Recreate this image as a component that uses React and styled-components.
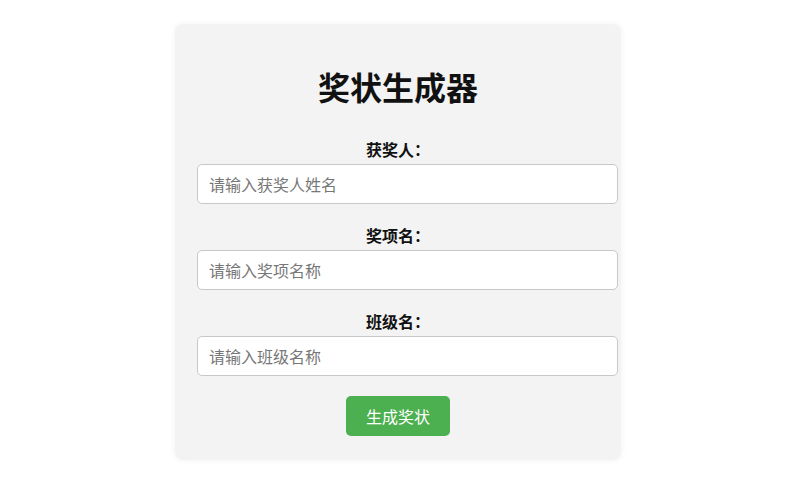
import styled, { createGlobalStyle } from "styled-components";

const Global = createGlobalStyle`
    body {
        margin: 0;
        background: #ffffff;
        font-family: "Noto Sans CJK SC", "Noto Sans", sans-serif;
    }
`

export default function App(){
    const fields = [
        { label: "获奖人：", placeholder: "请输入获奖人姓名" },
        { label: "奖项名：", placeholder: "请输入奖项名称" },
        { label: "班级名：", placeholder: "请输入班级名称" },
    ];

    return(
        <>
            <Global />
            <Page>
                <Card>
                    <Title>奖状生成器</Title>
                    {fields.map(field => (
                        <Field key={field.label}>
                            <Label>{field.label}</Label>
                            <Input placeholder={field.placeholder} />
                        </Field>
                    ))}
                    <Button>生成奖状</Button>
                </Card>
            </Page>
        </>
    )
}

const Page = styled.div`
    padding: 24px 0 34px 175px;
`

const Card = styled.div`
    width: 446px;
    box-sizing: border-box;
    padding: 43px 22px 24px;
    background-color: #f3f3f3;
    border-radius: 8px;
    box-shadow: 0 0 6px rgba(0, 0, 0, 0.06);
    display: flex;
    flex-direction: column;
`

const Title = styled.h1`
    margin: 0 0 32px;
    text-align: center;
    font-size: 32px;
    line-height: 38px;
    font-weight: 700;
    color: #111;
`

const Field = styled.div`
    display: flex;
    flex-direction: column;
    margin-bottom: 19px;
`

const Label = styled.label`
    text-align: center;
    font-size: 16px;
    line-height: 24px;
    font-weight: 700;
    color: #111;
    margin-bottom: 3px;
`

const Input = styled.input`
    width: 421px;
    height: 40px;
    box-sizing: border-box;
    border: 1px solid #c8c8c8;
    border-radius: 5px;
    background-color: #ffffff;
    padding: 0 11px;
    font-family: "Noto Sans CJK SC", sans-serif;
    font-size: 16px;

    &::placeholder{
        color: #777;
    }
`

const Button = styled.button`
    align-self: center;
    margin-top: 1px;
    width: 104px;
    height: 40px;
    border: none;
    border-radius: 5px;
    background-color: #4caf50;
    color: #ffffff;
    font-family: "Noto Sans CJK SC", sans-serif;
    font-size: 16px;
`
